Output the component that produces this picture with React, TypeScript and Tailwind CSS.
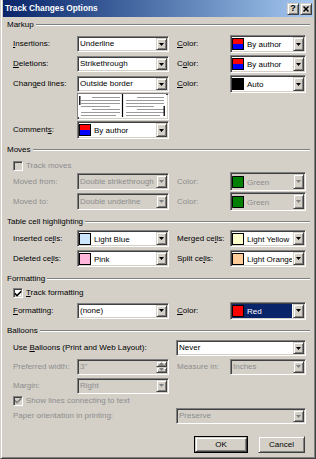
import React from "react";

const SUNKEN =
  "border border-t-[#808080] border-l-[#808080] border-r-white border-b-white shadow-[inset_1px_1px_0_#404040,inset_-1px_-1px_0_#d4d0c8]";
const RAISED =
  "border border-t-[#d4d0c8] border-l-[#d4d0c8] border-r-[#404040] border-b-[#404040] shadow-[inset_1px_1px_0_#ffffff,inset_-1px_-1px_0_#808080] bg-[#d4d0c8]";
const DIS = "text-[#8d8d8d]";

function U({ children }: { children: React.ReactNode }) {
  return <span className="underline underline-offset-1">{children}</span>;
}

function Arrow({ disabled }: { disabled?: boolean }) {
  return (
    <div className={`${RAISED} w-[11px] my-[1px] mr-[1px] flex items-center justify-center shrink-0`}>
      <svg width="5" height="3" viewBox="0 0 5 3">
        <path d="M0 0H5L2.5 3Z" fill={disabled ? "#808080" : "#000"} />
      </svg>
    </div>
  );
}

function Combo({ cls, text, disabled }: { cls: string; text: string; disabled?: boolean }) {
  return (
    <div className={`${SUNKEN} ${cls} shrink-0 flex items-stretch ${disabled ? "bg-[#d4d0c8]" : "bg-white"}`}>
      <div className={`flex-1 flex items-center pl-[2px] whitespace-nowrap overflow-hidden ${disabled ? DIS : ""}`}>
        {text}
      </div>
      <Arrow disabled={disabled} />
    </div>
  );
}

function Spin({ cls, text }: { cls: string; text: string }) {
  return (
    <div className={`${SUNKEN} ${cls} shrink-0 flex items-stretch bg-[#d4d0c8]`}>
      <div className={`flex-1 flex items-center pl-[2px] ${DIS}`}>{text}</div>
      <div className="w-[11px] my-[1px] mr-[1px] flex flex-col shrink-0">
        <div className={`${RAISED} flex-1 flex items-center justify-center`}>
          <svg width="5" height="3" viewBox="0 0 5 3">
            <path d="M0 3H5L2.5 0Z" fill="#808080" />
          </svg>
        </div>
        <div className={`${RAISED} flex-1 flex items-center justify-center`}>
          <svg width="5" height="3" viewBox="0 0 5 3">
            <path d="M0 0H5L2.5 3Z" fill="#808080" />
          </svg>
        </div>
      </div>
    </div>
  );
}

function Swatch({ cls }: { cls: string }) {
  return <span className={`w-[12px] h-[12px] border border-black shrink-0 ${cls}`} />;
}

function AuthorSwatch() {
  return (
    <span className="w-[12px] h-[12px] border border-black shrink-0 flex flex-col">
      <span className="flex-1 bg-[#ff0000]" />
      <span className="flex-1 bg-[#0000ff]" />
    </span>
  );
}

function ColorCombo({
  cls,
  text,
  swatch,
  disabled,
  selected,
}: {
  cls: string;
  text: string;
  swatch: React.ReactNode;
  disabled?: boolean;
  selected?: boolean;
}) {
  return (
    <div className={`${SUNKEN} ${cls} shrink-0 flex items-stretch ${disabled ? "bg-[#d4d0c8]" : "bg-white"}`}>
      <div
        className={`flex-1 flex items-center my-[1px] ml-[1px] mr-[1px] overflow-hidden ${
          selected ? "bg-[#0a246a] text-white" : ""
        } ${disabled ? DIS : ""}`}
      >
        {swatch}
        <span className="ml-[3px] pt-[2px] whitespace-nowrap">{text}</span>
      </div>
      <Arrow disabled={disabled} />
    </div>
  );
}

function Section({ title }: { title: string }) {
  return (
    <div className="flex items-center h-[12px]">
      <span className="whitespace-nowrap">{title}</span>
      <div className="flex-1 ml-[2px] h-[2px] border-t border-t-[#808080] border-b border-b-white" />
    </div>
  );
}

function Check({ label, checked, disabled }: { label: React.ReactNode; checked?: boolean; disabled?: boolean }) {
  return (
    <div className="flex items-center h-full">
      <div
        className={`${SUNKEN} w-[10px] h-[10px] shrink-0 flex items-center justify-center ${
          disabled ? "bg-[#d4d0c8]" : "bg-white"
        }`}
      >
        {checked && (
          <svg width="7" height="7" viewBox="0 0 7 7">
            <path d="M0 2.5L2 4.5L6.5 0V2.2L2 6.7L0 4.7Z" fill={disabled ? "#808080" : "#000"} />
          </svg>
        )}
      </div>
      <span className={`ml-[3px] ${disabled ? DIS : ""}`}>{label}</span>
    </div>
  );
}

function Preview() {
  const gray = "#9a9a9a";
  const leftLines: [number, number, number][] = [
    [3.5, 14, 42],
    [6.5, 3, 42],
    [9.5, 3, 42],
    [12.5, 3, 32],
    [15.5, 14, 42],
    [18.5, 3, 42],
    [21.5, 3, 38],
  ];
  return (
    <div className={`${SUNKEN} w-[92px] h-[27px] bg-white ml-[64px] shrink-0`}>
      <svg width="88" height="23" viewBox="0 0 88 23" className="block">
        <rect width="88" height="23" fill="#fff" />
        {leftLines.map(([y, a, b], i) => (
          <line key={"l" + i} x1={a} y1={y} x2={b} y2={y} stroke={gray} strokeWidth="1" />
        ))}
        {leftLines.map(([y, a, b], i) => (
          <line key={"r" + i} x1={a + 45} y1={y} x2={b + 44} y2={y} stroke={gray} strokeWidth="1" />
        ))}
        <rect x="1" y="2" width="1.5" height="9" fill="#202020" />
        <line x1="44.5" y1="0" x2="44.5" y2="23" stroke="#000" strokeWidth="1.2" />
        <rect x="85.5" y="12" width="1.5" height="10" fill="#202020" />
      </svg>
    </div>
  );
}

function Label({ children, disabled, cls }: { children: React.ReactNode; disabled?: boolean; cls?: string }) {
  return <div className={`${cls ?? "w-[64px]"} shrink-0 whitespace-nowrap ${disabled ? DIS : ""}`}>{children}</div>;
}

function Label2({ children, disabled }: { children: React.ReactNode; disabled?: boolean }) {
  return <div className={`w-[53px] ml-[8px] shrink-0 whitespace-nowrap ${disabled ? DIS : ""}`}>{children}</div>;
}

export default function App() {
  return (
    <div className="w-[316px] h-[459px] bg-[#d4d0c8] font-['Liberation_Sans',Arial,sans-serif] text-[8px] leading-none text-black overflow-hidden">
      <div className="h-full flex flex-col border-l border-r border-b border-l-[#d4d0c8] border-r-[#404040] border-b-[#404040] shadow-[inset_1px_0_0_#ffffff,inset_-1px_-1px_0_#808080] px-[2px]">
        {/* Title bar */}
        <div className="h-[17px] shrink-0 flex items-center bg-gradient-to-r from-[#0a246a] to-[#a6caf0] pl-[2px] pr-[1px]">
          <span className="text-white font-bold text-[8.3px] whitespace-nowrap">Track Changes Options</span>
          <div className="flex-1" />
          <div className="flex gap-[1px]">
            <div className={`${RAISED} w-[12px] h-[12px] flex items-center justify-center text-[9px] font-bold`}>?</div>
            <div className={`${RAISED} w-[12px] h-[12px] flex items-center justify-center`}>
              <svg width="6" height="6" viewBox="0 0 6 6">
                <path d="M0.5 0.5L5.5 5.5M5.5 0.5L0.5 5.5" stroke="#000" strokeWidth="1.5" />
              </svg>
            </div>
          </div>
        </div>

        <div className="flex flex-col pl-[4px] pr-[3px]">
          {/* Markup */}
          <div className="mt-[2px]">
            <Section title="Markup" />
          </div>
          <div className="flex items-center h-[18px] mt-[4px] pl-[6px]">
            <Label>
              <U>I</U>nsertions:
            </Label>
            <Combo cls="w-[92px] h-[16px]" text="Underline" />
            <Label2>
              <U>C</U>olor:
            </Label2>
            <ColorCombo cls="w-[76px] h-[18px]" text="By author" swatch={<AuthorSwatch />} />
          </div>
          <div className="flex items-center h-[18px] mt-[2px] pl-[6px]">
            <Label>
              <U>D</U>eletions:
            </Label>
            <Combo cls="w-[92px] h-[16px]" text="Strikethrough" />
            <Label2>
              C<U>o</U>lor:
            </Label2>
            <ColorCombo cls="w-[76px] h-[18px]" text="By author" swatch={<AuthorSwatch />} />
          </div>
          <div className="flex items-center h-[18px] mt-[2px] pl-[6px]">
            <Label>
              Chan<U>g</U>ed lines:
            </Label>
            <Combo cls="w-[92px] h-[16px]" text="Outside border" />
            <Label2>
              <U>C</U>olor:
            </Label2>
            <ColorCombo cls="w-[76px] h-[18px]" text="Auto" swatch={<Swatch cls="bg-black" />} />
          </div>
          <div className="flex pl-[6px]">
            <Preview />
          </div>
          <div className="flex items-center h-[18px] mt-[1px] pl-[6px]">
            <Label>
              Comment<U>s</U>:
            </Label>
            <ColorCombo cls="w-[92px] h-[18px]" text="By author" swatch={<AuthorSwatch />} />
          </div>

          {/* Moves */}
          <div className="mt-[5px]">
            <Section title="Moves" />
          </div>
          <div className="h-[12px] mt-[4px] pl-[6px]">
            <Check label="Track moves" disabled />
          </div>
          <div className="flex items-center h-[19px] pl-[6px]">
            <Label disabled>Moved from:</Label>
            <Combo cls="w-[92px] h-[17px]" text="Double strikethrough" disabled />
            <Label2 disabled>Color:</Label2>
            <ColorCombo cls="w-[76px] h-[19px]" text="Green" swatch={<Swatch cls="bg-[#008000]" />} disabled />
          </div>
          <div className="flex items-center h-[19px] mt-[1px] pl-[6px]">
            <Label disabled>Moved to:</Label>
            <Combo cls="w-[92px] h-[17px]" text="Double underline" disabled />
            <Label2 disabled>Color:</Label2>
            <ColorCombo cls="w-[76px] h-[19px]" text="Green" swatch={<Swatch cls="bg-[#008000]" />} disabled />
          </div>

          {/* Table cell highlighting */}
          <div className="mt-[5px]">
            <Section title="Table cell highlighting" />
          </div>
          <div className="flex items-center h-[19px] mt-[1px] pl-[6px]">
            <Label>
              Inserted ce<U>l</U>ls:
            </Label>
            <ColorCombo cls="w-[92px] h-[17px]" text="Light Blue" swatch={<Swatch cls="bg-[#cce6ff]" />} />
            <Label2>
              Merged ce<U>l</U>ls:
            </Label2>
            <ColorCombo cls="w-[76px] h-[17px]" text="Light Yellow" swatch={<Swatch cls="bg-[#ffffcc]" />} />
          </div>
          <div className="flex items-center h-[19px] mt-[1px] pl-[6px]">
            <Label>
              Deleted ce<U>l</U>ls:
            </Label>
            <ColorCombo cls="w-[92px] h-[17px]" text="Pink" swatch={<Swatch cls="bg-[#ffb8dc]" />} />
            <Label2>
              Split ce<U>l</U>ls:
            </Label2>
            <ColorCombo cls="w-[76px] h-[17px]" text="Light Orange" swatch={<Swatch cls="bg-[#ffcc99]" />} />
          </div>

          {/* Formatting */}
          <div className="mt-[5px]">
            <Section title="Formatting" />
          </div>
          <div className="h-[12px] mt-[2px] pl-[6px]">
            <Check
              label={
                <>
                  <U>T</U>rack formatting
                </>
              }
              checked
            />
          </div>
          <div className="flex items-center h-[19px] mt-[2px] pl-[6px]">
            <Label>
              <U>F</U>ormatting:
            </Label>
            <Combo cls="w-[92px] h-[16px]" text="(none)" />
            <Label2>
              <U>C</U>olor:
            </Label2>
            <ColorCombo cls="w-[76px] h-[18px]" text="Red" swatch={<Swatch cls="bg-[#ff0000]" />} selected />
          </div>

          {/* Balloons */}
          <div className="mt-[5px]">
            <Section title="Balloons" />
          </div>
          <div className="flex items-center h-[18px] mt-[2px] pl-[6px]">
            <Label cls="w-[163px]">
              Use <U>B</U>alloons (Print and Web Layout):
            </Label>
            <Combo cls="w-[130px] h-[16px]" text="Never" />
          </div>
          <div className="flex items-center h-[19px] pl-[6px]">
            <Label disabled>Preferred width:</Label>
            <Spin cls="w-[92px] h-[16px]" text={'3"'} />
            <Label2 disabled>Measure in:</Label2>
            <Combo cls="w-[76px] h-[16px]" text="Inches" disabled />
          </div>
          <div className="flex items-center h-[19px] pl-[6px]">
            <Label disabled>Margin:</Label>
            <Combo cls="w-[92px] h-[16px]" text="Right" disabled />
          </div>
          <div className="h-[11px] pl-[6px]">
            <Check label="Show lines connecting to text" checked disabled />
          </div>
          <div className="flex items-center h-[18px] mt-[1px] pl-[6px]">
            <Label cls="w-[163px]" disabled>
              Paper orientation in printing:
            </Label>
            <Combo cls="w-[130px] h-[16px]" text="Preserve" disabled />
          </div>

          {/* Buttons */}
          <div className="flex justify-end gap-[10px] mt-[11px] pr-[5px]">
            <div className="w-[54px] h-[17px] border border-black flex">
              <div className={`${RAISED} flex-1 flex items-center justify-center`}>OK</div>
            </div>
            <div className={`${RAISED} w-[47px] h-[17px] flex items-center justify-center`}>Cancel</div>
          </div>
        </div>
      </div>
    </div>
  );
}
